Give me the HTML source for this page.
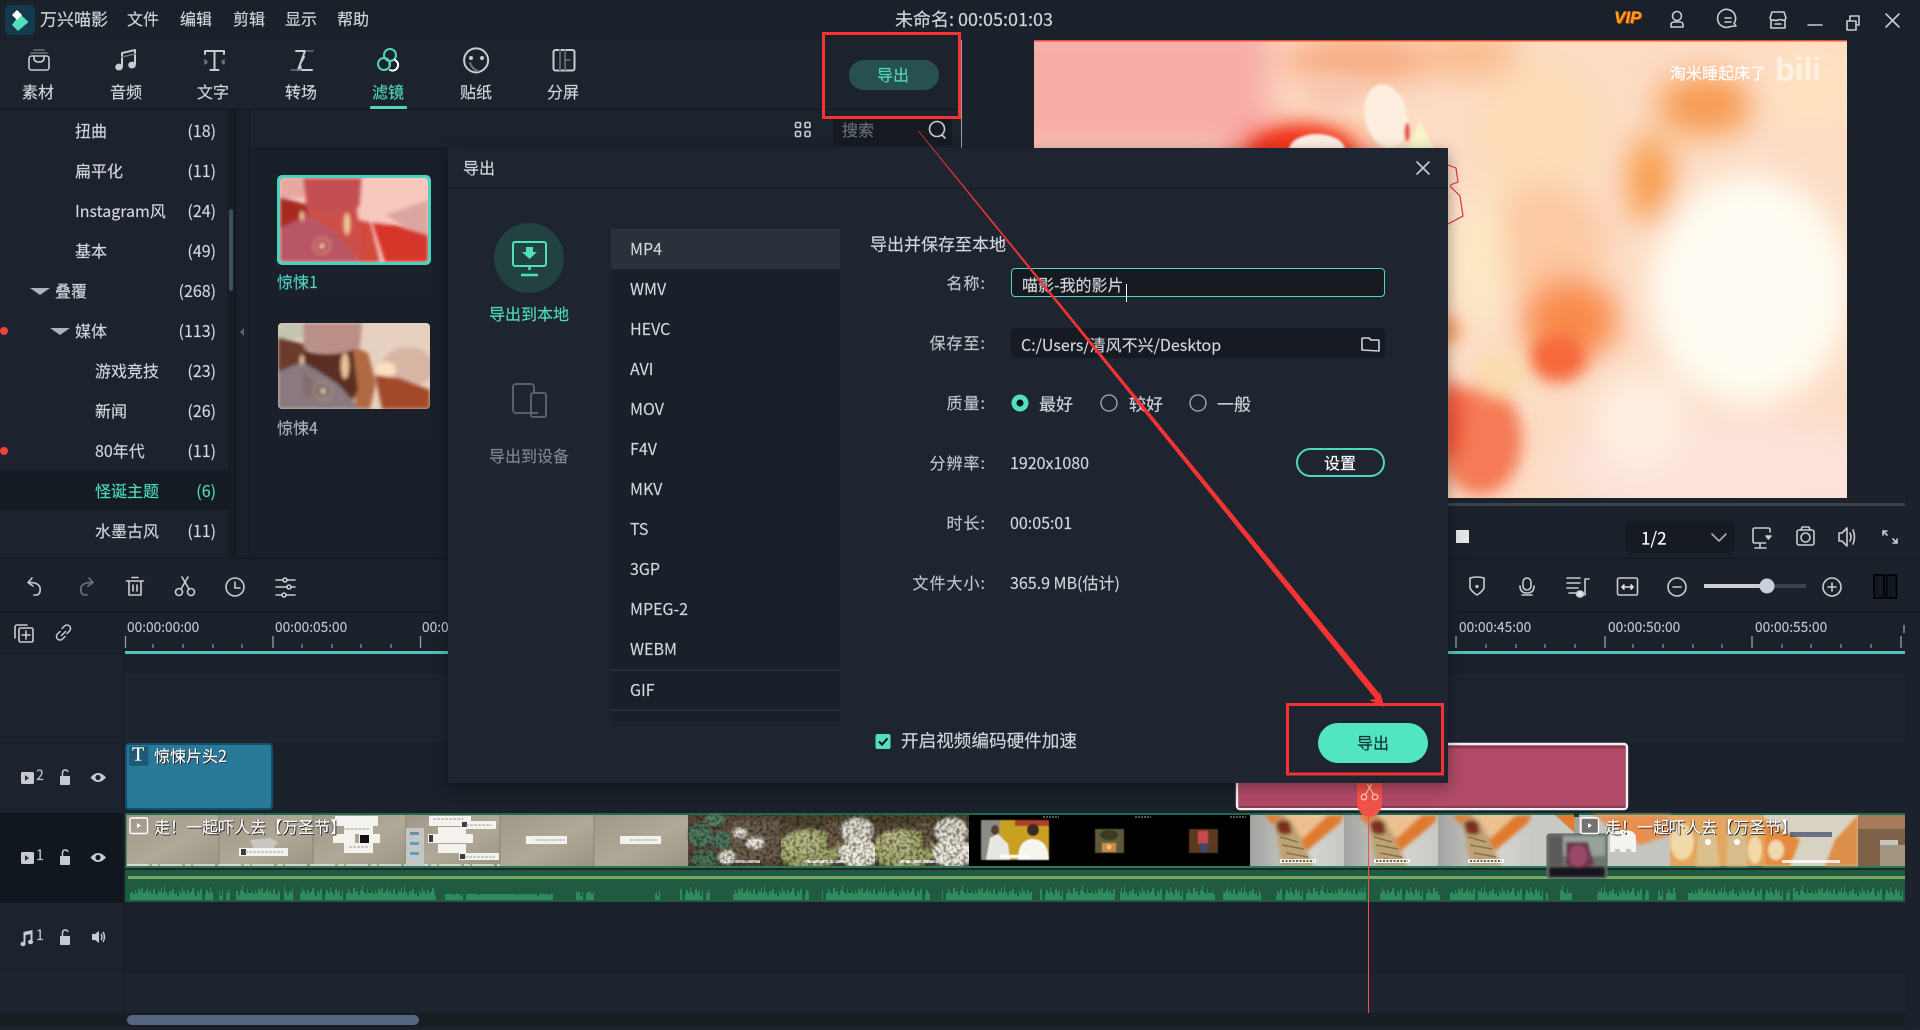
<!DOCTYPE html>
<html lang="zh-CN"><head><meta charset="utf-8"><title>万兴喵影</title>
<style>
html,body{margin:0;padding:0;background:#1b222c}
body{width:1920px;height:1030px;position:relative;overflow:hidden;font-family:"Noto Sans CJK SC","Liberation Sans",sans-serif;font-size:16px;color:#d2d6da}
.b{position:absolute}
.t{position:absolute;white-space:nowrap;line-height:1;transform:translateY(-50%);margin-top:-1px;-webkit-text-stroke:.15px currentColor}
.c{position:absolute;white-space:nowrap;line-height:1;transform:translate(-50%,-50%);margin-top:-1px;-webkit-text-stroke:.15px currentColor}
svg.l{position:absolute;left:0;top:0;width:1920px;height:1030px;overflow:visible}
.s{fill:none;stroke:#c9cdd1;stroke-width:1.6;stroke-linecap:round;stroke-linejoin:round}
.g{stroke:#6b7278}
.tl{color:#fff;text-shadow:1px 1px 0 #222,-1px 0 0 rgba(0,0,0,.4)}
</style></head><body>

<!-- panels -->
<div class="b" style="left:0;top:0;width:1920px;height:40px;background:#1a212b"></div>
<div class="b" style="left:0;top:40px;width:960px;height:69px;background:#1c232d;border-bottom:1px solid #12171d"></div>
<div class="b" style="left:0;top:110px;width:228px;height:448px;background:#1c232e"></div>
<div class="b" style="left:0;top:470px;width:228px;height:40px;background:#151b23"></div>
<div class="b" style="left:228px;top:110px;width:7px;height:448px;background:#171d25"></div>
<div class="b" style="left:229px;top:209px;width:4px;height:82px;background:#3d505c;border-radius:2px"></div>
<div class="b" style="left:235px;top:110px;width:15px;height:448px;background:#1a212b;border-left:1px solid #12171d;border-right:1px solid #12171d;box-sizing:border-box"></div>
<div class="b" style="left:250px;top:110px;width:710px;height:38px;background:#1c232d;border-bottom:1px solid #12171d"></div>
<div class="b" style="left:250px;top:149px;width:710px;height:409px;background:#19202a"></div>
<div class="b" style="left:961px;top:40px;width:1px;height:108px;background:#9aa0a6"></div>
<div class="b" style="left:0;top:558px;width:1920px;height:1px;background:#12171d"></div>
<div class="b" style="left:0;top:611px;width:1920px;height:1px;background:#141a21"></div>
<div class="b" style="left:0;top:612px;width:1920px;height:61px;background:#1a212b"></div>
<div class="b" style="left:0;top:653px;width:124px;height:1px;background:#141a21"></div>
<div class="b" style="left:0;top:654px;width:123px;height:90px;background:#1c232e"></div>
<div class="b" style="left:124px;top:673px;width:1781px;height:70px;background:#1d2430"></div>
<div class="b" style="left:0;top:743px;width:123px;height:70px;background:#1c232e;border-top:1px solid #171d25;box-sizing:border-box"></div>
<div class="b" style="left:124px;top:743px;width:1781px;height:70px;background:#1a212b"></div>
<div class="b" style="left:0;top:813px;width:123px;height:90px;background:#10171f"></div>
<div class="b" style="left:124px;top:813px;width:1781px;height:90px;background:#1a212b"></div>
<div class="b" style="left:0;top:903px;width:123px;height:70px;background:#1c232e"></div>
<div class="b" style="left:124px;top:903px;width:1781px;height:70px;background:#1a212b"></div>
<div class="b" style="left:0;top:973px;width:1905px;height:40px;background:#1d2430"></div>
<div class="b" style="left:123px;top:654px;width:1px;height:359px;background:#171d25"></div>
<div class="b" style="left:0;top:1013px;width:1905px;height:14px;background:#181d22"></div>
<div class="b" style="left:0;top:1027px;width:1920px;height:3px;background:#1c232d"></div>
<div class="b" style="left:126.5px;top:1015px;width:292px;height:10px;background:#55677f;border-radius:5px"></div>
<div class="b" style="left:833px;top:118px;width:119px;height:27px;background:#161b23;border-radius:3px"></div>
<div class="b" style="left:1625px;top:521px;width:110px;height:32px;background:#161b23;border-radius:5px"></div>
<div class="b" style="left:1448px;top:503px;width:457px;height:3px;background:#3a424d"></div>
<div class="b" style="left:277px;top:266px;width:158px;height:32px;background:#1a212b"></div>
<div class="b" style="left:277px;top:410px;width:158px;height:32px;background:#1a212b"></div>

<svg class="l" viewBox="0 0 1920 1030" xmlns="http://www.w3.org/2000/svg">
<defs>
<clipPath id="pv"><rect x="1034" y="40" width="813" height="458"/></clipPath>
<clipPath id="th1"><rect x="280" y="178" width="148" height="84" rx="4"/></clipPath>
<clipPath id="th2"><rect x="278" y="323" width="152" height="86" rx="4"/></clipPath>
<filter id="b18" x="-50%" y="-50%" width="200%" height="200%"><feGaussianBlur stdDeviation="16"/></filter>
<filter id="b6" x="-50%" y="-50%" width="200%" height="200%"><feGaussianBlur stdDeviation="8"/></filter>
<filter id="b2" x="-20%" y="-20%" width="140%" height="140%"><feGaussianBlur stdDeviation="1.800"/></filter>
<filter id="b3" x="-20%" y="-20%" width="140%" height="140%"><feGaussianBlur stdDeviation="3"/></filter>
<filter id="b1" x="-20%" y="-20%" width="140%" height="140%"><feGaussianBlur stdDeviation="1.200"/></filter>
<filter id="b05" x="-10%" y="-10%" width="120%" height="120%"><feGaussianBlur stdDeviation=".5"/></filter>
<filter id="nz" x="0" y="0" width="100%" height="100%"><feTurbulence type="fractalNoise" baseFrequency=".3" numOctaves="2" seed="4"/><feColorMatrix type="matrix" values="0 0 0 0 0  0 0 0 0 0  0 0 0 0 0  0 0 0 3 -1.200"/></filter>
<pattern id="w" patternUnits="userSpaceOnUse" x="130" y="884" width="120" height="16"><path fill="#2f8b5e" d="M0 16V9H2V7H3V10H5V6H6V9H8V5H10V8H11V4H13V9H15V7H17V3H18V8H20V6H21V10H23V5H25V9H26V11H28V6H29V8H31V4H32V9H34V2H35V8H37V11H39V7H41V9H42V5H44V10H46V8H47V12H49V6H50V9H52V3H53V7H55V10H57V6H59V11H60V8H62V4H64V9H65V12H67V7H69V10H70V5H72V16H75V10H76V6H78V9H80V3H81V8H83V11H85V5H87V9H88V7H90V12H92V6H93V16H96V9H98V5H99V8H101V10H103V4H105V9H106V7H108V11H110V6H112V1H113V8H115V10H117V5H118V9H120V16Z"/></pattern>
<linearGradient id="con" x1="0" y1="0" x2="1" y2="1"><stop offset="0" stop-color="#9f9787"/><stop offset=".55" stop-color="#b0a997"/><stop offset="1" stop-color="#9b9482"/></linearGradient>
<linearGradient id="fg" x1="0" y1="0" x2="1" y2="0"><stop offset="0" stop-color="#a2a3a0"/><stop offset=".6" stop-color="#d6d6d2"/><stop offset="1" stop-color="#c8c8c4"/></linearGradient>
<symbol id="finger" viewBox="0 0 94 51" width="94" height="51">
<rect width="94" height="51" fill="url(#fg)"/>
<g filter="url(#b2)"><polygon points="14,0 94,0 90,8 52,40" fill="#e07a2e"/><polygon points="34,0 78,0 52,24" fill="#ecc08f"/>
<path d="M24 6q10-6 18 0l22 45H32Z" fill="#bda273"/><path d="M26 8q8-6 14 0l2 10q-8 4-14-1Z" fill="#7c2e1c"/></g>
<path d="M30 22l18 5M32 30l22 4M36 38l22 4M40 44l20 3" stroke="#7c6644" stroke-width="1.600" opacity=".8" fill="none"/>
<rect x="30" y="44" width="36" height="4" fill="#fff" opacity=".85"/><path d="M32 46h32" stroke="#333" stroke-dasharray="2 1.500" stroke-width="1.500"/>
</symbol>
<symbol id="bunny" viewBox="0 0 94 51" width="94" height="51">
<rect width="94" height="51" fill="#5c4d3d"/>
<g filter="url(#b1)"><rect y="0" width="94" height="9" fill="#4f4a2e"/><ellipse cx="28" cy="34" rx="32" ry="20" fill="#a2a96c"/><ellipse cx="20" cy="28" rx="18" ry="13" fill="#b7b881"/><ellipse cx="76" cy="16" rx="17" ry="13" fill="#ded9ce"/><ellipse cx="78" cy="38" rx="20" ry="15" fill="#efe9dd"/><rect x="46" y="6" width="10" height="28" fill="#6e5b46"/></g>
<rect x="22" y="45" width="42" height="3" fill="#fff" opacity=".8"/>
</symbol>
</defs>

<!-- preview -->
<g clip-path="url(#pv)">
<rect x="1034" y="40" width="813" height="458" fill="#fcdcc4"/>
<g filter="url(#b18)">
<rect x="1000" y="20" width="270" height="130" fill="#f8aca8"/>
<ellipse cx="1300" cy="165" rx="70" ry="38" fill="#f2421f"/>
<ellipse cx="1360" cy="60" rx="80" ry="22" fill="#f7a77c"/>
<ellipse cx="1470" cy="55" rx="50" ry="22" fill="#f9b98a"/>
<ellipse cx="1540" cy="130" rx="65" ry="70" fill="#fddcb6"/>
<ellipse cx="1545" cy="240" rx="60" ry="55" fill="#fcc9a2"/>
<ellipse cx="1705" cy="105" rx="48" ry="30" fill="#f79a50"/>
<ellipse cx="1650" cy="180" rx="22" ry="45" fill="#f89a45"/>
<ellipse cx="1570" cy="320" rx="48" ry="42" fill="#f98a48"/>
<ellipse cx="1750" cy="290" rx="100" ry="115" fill="#fffdf3"/>
<ellipse cx="1810" cy="90" rx="45" ry="40" fill="#fee2c0"/>
<ellipse cx="1730" cy="470" rx="170" ry="50" fill="#fde3dc"/>
<ellipse cx="1480" cy="260" rx="24" ry="70" fill="#fdebc6"/>
<ellipse cx="1640" cy="420" rx="50" ry="50" fill="#feeee0"/>
</g>
<g filter="url(#b6)">
<ellipse cx="1300" cy="150" rx="50" ry="22" fill="#f2361a"/>
<ellipse cx="1558" cy="358" rx="28" ry="24" fill="#f7683a"/>
<ellipse cx="1480" cy="440" rx="42" ry="55" fill="#f57a55"/>
<ellipse cx="1452" cy="420" rx="12" ry="40" fill="#f0553a"/>
<ellipse cx="1500" cy="375" rx="26" ry="22" fill="#fbdcae"/>
<ellipse cx="1335" cy="90" rx="30" ry="14" fill="#f9c4b0"/>
<ellipse cx="1450" cy="330" rx="10" ry="14" fill="#f39a60"/>
</g>
<g filter="url(#b1)">
<ellipse cx="1386" cy="116" rx="21" ry="32" transform="rotate(-12 1386 116)" fill="#fcefdf"/>
<ellipse cx="1407" cy="132" rx="2.800" ry="9" fill="#e8604a"/>
<path d="M1408 150l12-30 14 30Z" fill="#f9f5c8"/>
<ellipse cx="1317" cy="150" rx="28" ry="16" fill="#fdeee2"/>
</g>
<rect x="1034" y="40" width="813" height="1.500" fill="#e8502e"/>
<path d="M1448 165l8 3 2 14-8 3M1450 186l10 10 3 20-15 8" fill="none" stroke="#d8324a" stroke-width="1.200"/>
</g>

<!-- filter thumbs -->
<g>
<rect x="277" y="175" width="154" height="90" rx="5" fill="#4ed2bd"/>
<g clip-path="url(#th1)"><rect x="280" y="178" width="148" height="84" fill="#f7c8bf"/>
<g filter="url(#b2)">
<rect x="280" y="178" width="26" height="20" fill="#e8a8a0"/>
<polygon points="280,197 308,205 312,232 280,240" fill="#a62a24"/>
<polygon points="345,178 428,178 428,210 385,225 360,220" fill="#f8c8bd"/>
<polygon points="385,215 428,200 428,240" fill="#dca6a0"/>
<polygon points="372,222 395,225 428,235 428,262 385,262" fill="#d6342a"/>
<path d="M352 218l18 4 10 40h-22Z" fill="#d24a3c"/>
<path d="M303 178h59l-2 28q-20 18-53 4Z" fill="#c45052"/>
<path d="M307 206q25 14 50 0l5 46-10 10H312Z" fill="#cd4f4a"/>
<path d="M280 228l26-12 14 6 18 14 22 26H280Z" fill="#b95666"/>
<ellipse cx="347" cy="224" rx="3" ry="11" fill="#f2c89a"/><ellipse cx="302" cy="216" rx="2" ry="5" fill="#f0c8a0"/>
<circle cx="322" cy="246" r="8" fill="none" stroke="#d89060" stroke-width="1.500"/><circle cx="322" cy="246" r="2" fill="#f8e8c0"/>
</g></g>
</g>
<g clip-path="url(#th2)"><rect x="278" y="323" width="152" height="86" fill="#e6d0c0"/>
<g filter="url(#b2)">
<rect x="278" y="323" width="28" height="16" fill="#c4c4b2"/>
<polygon points="278,337 307,345 307,372 278,378" fill="#6b3a2a"/>
<ellipse cx="408" cy="367" rx="26" ry="20" fill="#d8b6a4"/>
<ellipse cx="386" cy="370" rx="10" ry="8" fill="#fbe0c0"/>
<polygon points="375,375 400,378 430,390 430,409 382,409" fill="#a34a2c"/>
<path d="M350 345l18 8 8 30-6 26h-14Z" fill="#b06a42"/>
<path d="M303 323h59l-2 24q-26 12-56 2Z" fill="#b98f88"/>
<path d="M303 350q25 8 50 0l5 40-10 19H312Z" fill="#5a2f20"/>
<path d="M278 372l24-10 14 8 22 14 22 25H278Z" fill="#8a7a80"/>
<path d="M302 366q6 16 22 20l12 6-34 6Z" fill="#7a5a52" opacity=".4"/>
<ellipse cx="345" cy="366" rx="4" ry="13" fill="#f0c098"/><ellipse cx="302" cy="360" rx="2" ry="5" fill="#f0c8a0"/>
<circle cx="323" cy="391" r="9" fill="none" stroke="#b09070" stroke-width="1.300"/><circle cx="323" cy="391" r="2" fill="#f8e8c0"/>
</g></g>

<!-- timeline: text clip / pink clip -->
<rect x="126" y="744" width="146" height="65" rx="3" fill="#28799a" stroke="#124f68" stroke-width="2"/>
<rect x="129" y="746" width="19.500" height="20" rx="2" fill="#1d5a75"/>
<rect x="1237" y="744" width="390" height="65" rx="3" fill="#b04a66" stroke="#f4f1f2" stroke-width="2.400"/>
<rect x="1238.500" y="745.500" width="387" height="3" fill="#8a3b50"/>
<rect x="1238.500" y="806" width="387" height="2" fill="#8a3b50"/>

<!-- video clip -->
<rect x="125" y="813" width="1780" height="89" fill="#1f5a41"/>
<rect x="125" y="813" width="1780" height="2" fill="#1e6a4f"/>
<rect x="126.500" y="815" width="1778.500" height="51" fill="#a9a18f"/>
<rect x="125" y="866" width="1780" height="2" fill="#2a7a5a"/>
<rect x="125" y="868" width="1780" height="2" fill="#1a2a26"/>
<rect x="128" y="876" width="1777" height="3" fill="#74a85f"/>
<!-- concrete thumbs -->
<rect x="126.500" y="815" width="93" height="51" fill="url(#con)"/><rect x="219" y="815" width="94" height="51" fill="url(#con)"/><rect x="313" y="815" width="93" height="51" fill="url(#con)"/><rect x="406" y="815" width="94" height="51" fill="url(#con)"/><rect x="500" y="815" width="94" height="51" fill="url(#con)"/><rect x="594" y="815" width="94" height="51" fill="url(#con)"/>
<path d="M219 815v51M313 815v51M406 815v51M500 815v51M594 815v51" stroke="#857e6e" stroke-width=".8"/>
<path d="M127 865H219M219 865H313M313 865H406M406 865H500" stroke="#e8e6df" stroke-width="1.600" stroke-dasharray="22 3 6 2"/>
<g fill="#f3f2ee">
<path d="M250 840l20-2 8 4-6 8-18-1Z" fill="#c9c7c0"/>
<rect x="239" y="848" width="49" height="8"/>
<rect x="335" y="816" width="43" height="10"/><rect x="344" y="826" width="29" height="8"/><rect x="333" y="834" width="22" height="9"/><rect x="359" y="834" width="21" height="9"/><rect x="344" y="843" width="29" height="10"/>
<rect x="406" y="828" width="18" height="38" fill="#c5c6c6"/>
<rect x="429" y="816" width="42" height="10"/><rect x="461" y="821" width="35" height="8"/><rect x="438" y="827" width="28" height="7"/><rect x="428" y="834" width="45" height="9"/><rect x="438" y="844" width="28" height="9"/><rect x="459" y="853" width="40" height="7"/>
<rect x="526" y="836" width="41" height="8"/><rect x="620" y="836" width="41" height="8"/>
</g>
<g fill="#3b3b3b"><rect x="241" y="849" width="5" height="6"/><rect x="360" y="835" width="9" height="8" fill="#111"/><rect x="429" y="835" width="4" height="7"/><rect x="462" y="822" width="5" height="5"/><rect x="460" y="854" width="5" height="5"/><rect x="410" y="832" width="9" height="3" fill="#6a8da8"/><rect x="410" y="842" width="9" height="3" fill="#5e9ec4"/><rect x="410" y="852" width="9" height="3" fill="#5e9ec4"/></g>
<path d="M339 829h30M349 847h20M433 819h30M466 825h26M535 840h30M630 840h28M245 852h38M465 857h30" stroke="#a0a0a0" stroke-width="1" stroke-dasharray="3 1"/>
<!-- plant thumbs -->
<g><rect x="688" y="815" width="93" height="51" fill="#5a4a3a"/>
<g filter="url(#b1)"><ellipse cx="700" cy="835" rx="12" ry="12" fill="#4f7a60"/><ellipse cx="722" cy="840" rx="12" ry="9" fill="#4f7a60"/><ellipse cx="705" cy="858" rx="14" ry="8" fill="#4a7058"/><rect x="730" y="820" width="50" height="40" fill="#6d5e4e"/><ellipse cx="740" cy="833" rx="7" ry="5" fill="#e9e5d8"/><ellipse cx="755" cy="843" rx="9" ry="6" fill="#efeade"/><ellipse cx="727" cy="857" rx="8" ry="7" fill="#e6e2d3"/><ellipse cx="715" cy="820" rx="10" ry="6" fill="#5a8468"/></g>
<rect x="720" y="860" width="40" height="3" fill="#fff" opacity=".7"/></g>
<use href="#bunny" x="781" y="815"/><use href="#bunny" x="875" y="815"/>
<rect x="688" y="815" width="281" height="51" filter="url(#nz)" opacity=".45"/>
<!-- black thumbs -->
<rect x="969" y="815" width="281" height="51" fill="#000"/>
<g filter="url(#b05)"><rect x="981" y="820" width="68" height="40" fill="#c9a020"/><rect x="981" y="820" width="19" height="40" fill="#8b8d84"/><path d="M1015 820h34v6h-34Z" fill="#a8402c"/><path d="M986 860l4-22 8-4 10 10 2 16Z" fill="#e8e8e2"/><ellipse cx="995" cy="830" rx="4" ry="5" fill="#5a3a2a"/><path d="M1018 860q0-20 14-21 16 0 17 21Z" fill="#f5f5ee"/><circle cx="1033" cy="830" r="6" fill="#3a2a20"/><rect x="1000" y="855" width="30" height="3" fill="#fff"/></g>
<g filter="url(#b05)"><rect x="1095" y="829" width="29" height="24" fill="#5c5a3a"/><rect x="1102" y="843" width="14" height="9" fill="#c88a50"/><circle cx="1109" cy="847" r="2.500" fill="#f8c060"/><ellipse cx="1109" cy="835" rx="9" ry="5" fill="#3a3a24"/>
<rect x="1189" y="829" width="29" height="24" fill="#5a3a22"/><rect x="1198" y="831" width="10" height="13" fill="#c84a48"/><rect x="1200" y="843" width="7" height="9" fill="#3a4a6a"/></g>
<path d="M1043 817h16M1135 817h16M1230 817h16" stroke="#8a8a8a" stroke-width="1.200" stroke-dasharray="2 1"/>
<!-- finger thumbs -->
<use href="#finger" x="1250" y="815"/><use href="#finger" x="1344" y="815"/><use href="#finger" x="1438" y="815"/>
<rect x="1532" y="815" width="42" height="51" fill="#c8c8c4"/><polygon points="1555,815 1574,815 1574,832" fill="#e37c2e"/>
<rect x="1574" y="813" width="5" height="4" fill="#1c3a30"/>
<rect x="1579" y="815" width="91" height="51" fill="#c4c4c0"/><g filter="url(#b2)"><polygon points="1592,815 1670,815 1670,835 1640,845" fill="#e88f4e"/></g>
<g><rect x="1670" y="815" width="94" height="51" fill="#e3a55f"/><g filter="url(#b1)"><ellipse cx="1682" cy="842" rx="12" ry="18" fill="#f2d9a8"/><path d="M1698 835q8-12 18 0l4 31h-24Z" fill="#d9c08c"/><path d="M1728 832q8-10 18 0l2 34h-22Z" fill="#d6bd8a"/><ellipse cx="1755" cy="850" rx="7" ry="14" fill="#f2d9a8"/></g><circle cx="1708" cy="842" r="3" fill="#fff"/><circle cx="1737" cy="842" r="3" fill="#fff"/></g>
<g><rect x="1764" y="815" width="94" height="51" fill="#d8d2c2"/><g filter="url(#b1)"><polygon points="1764,818 1800,840 1790,866 1764,866" fill="#e58a3c"/><ellipse cx="1776" cy="850" rx="8" ry="10" fill="#f1d9b0"/><polygon points="1835,840 1858,815 1858,866 1825,866" fill="#dc8f4a"/></g><rect x="1790" y="832" width="42" height="5" fill="#3b4768" opacity=".7"/><rect x="1782" y="860" width="58" height="3" fill="#fff" opacity=".8"/></g>
<g><rect x="1858" y="815" width="47" height="51" fill="#7f6048"/><rect x="1858" y="815" width="47" height="14" fill="#a77a5c"/><rect x="1880" y="845" width="25" height="21" fill="#a59680"/><rect x="1880" y="840" width="18" height="5" fill="#c4c4c0"/></g>
<!-- playhead over clip -->
<rect x="1368" y="790" width="1" height="223" fill="#f0524a"/>
<path d="M1357 783h25v20a12.500 14 0 0 1-25 0Z" fill="#f0524a"/>
<g fill="none" stroke="#fbd6d0" stroke-width="1.100"><circle cx="1364" cy="797" r="2.800"/><circle cx="1375" cy="797" r="2.800"/><path d="M1365.500 794.500l6-10M1373.500 794.500l-6-10"/></g>
<!-- ghost & transition -->
<path d="M1610 852v-14q0-8 13-8t13 8v14h-5v-3h-5v3h-6v-3h-5v3Z" fill="#f5f3ef"/>
<rect x="1547" y="834" width="60" height="44" rx="3" fill="#70766f"/>
<g filter="url(#b1)"><rect x="1549" y="836" width="56" height="20" fill="#95a39a"/><rect x="1549" y="836" width="14" height="30" fill="#5a5a58"/><path d="M1566 842l22 0 6 22-14 10-14-10Z" fill="#6a3a50"/><ellipse cx="1578" cy="856" rx="9" ry="11" fill="#9a4a68"/><rect x="1549" y="867" width="56" height="10" fill="#15121a"/></g>
<!-- waveform -->
<g fill="url(#w)"><rect x="130" y="884" width="83" height="16"/><rect x="219" y="884" width="11" height="16"/><rect x="236" y="884" width="44" height="16"/><rect x="284" y="884" width="9" height="16"/><rect x="300" y="884" width="136" height="16"/><rect x="445" y="894" width="108" height="6"/><rect x="576" y="892" width="18" height="8"/><rect x="655" y="888" width="5" height="12"/><rect x="680" y="884" width="30" height="16"/><rect x="733" y="884" width="76" height="16"/><rect x="822" y="884" width="108" height="16"/><rect x="942" y="884" width="90" height="16"/><rect x="1040" y="884" width="75" height="16"/><rect x="1120" y="884" width="95" height="16"/><rect x="1223" y="884" width="38" height="16"/><rect x="1276" y="884" width="90" height="16"/><rect x="1380" y="884" width="60" height="16"/><rect x="1450" y="884" width="25" height="16"/><rect x="1478" y="884" width="70" height="16"/><rect x="1560" y="884" width="12" height="16"/><rect x="1597" y="884" width="52" height="16"/><rect x="1658" y="884" width="18" height="16"/><rect x="1688" y="884" width="18" height="16"/><rect x="1700" y="884" width="90" height="16"/><rect x="1793" y="884" width="46" height="16"/><rect x="1834" y="884" width="71" height="16"/></g>
<rect x="1547" y="834" width="60" height="44" rx="3" fill="none" stroke="#59606a"/>

<!-- ruler -->
<rect x="125" y="651" width="1780" height="3" fill="#4fc4b6"/>
<path d="M125.500 636v12M273 636v12M420.500 636v12M1456 636v12M1605 636v12M1752 636v12M1901 636v12M1904 625v8" stroke="#8ea3b0" stroke-width="1.300" fill="none"/>
<path d="M153 644v4M183 644v4M213 644v4M242 644v4M302 644v4M332 644v4M361 644v4M391 644v4M1486 644v4M1516 644v4M1545 644v4M1575 644v4M1633 644v4M1663 644v4M1693 644v4M1722 644v4M1782 644v4M1811 644v4M1841 644v4M1871 644v4" stroke="#7f99a8" stroke-width="1.200" fill="none"/>

<!-- title bar icons -->
<rect x="5" y="5" width="30" height="30" rx="6" fill="#153a4e"/>
<polygon points="20,14 28.500,22 18,31 12,25" fill="#52e0bc"/>
<polygon points="17,10 22,15 17,20 12,15" fill="#fff"/>
<g class="s" stroke-width="1.300">
<circle cx="1677" cy="16" r="4.500"/><path d="M1671 27v-2q0-3 3-3h6q3 0 3 3v2Z"/>
<path d="M1736 26l-2-2.500a9 9 0 1 0-3.500 3Z"/><path d="M1725 18h6M1725 22h6"/>
<path d="M1770 18l2-6h12l2 6q-1 3-4 2-2-1-4 0-2 1-4 0-3 1-4-2ZM1771 20v8h14v-8M1775 24h6"/>
<path d="M1808 25h14"/>
<path d="M1847 21h9v9h-9ZM1850 21v-5h9v9h-3"/>
<path d="M1886 14l13 13M1899 14l-13 13"/>
</g>

<!-- toolbar icons -->
<g class="s">
<rect x="29" y="56" width="20" height="14" rx="2.500"/><path d="M34 56v2q0 4 5 4t5-4v-2"/><path class="g" d="M34 50h10M31 53h16"/>
<path d="M122 67V53l13-3v14" stroke-width="2"/><path class="g" d="M122 57l13-3"/><ellipse cx="119" cy="67" rx="3" ry="2.600" fill="#c9cdd1"/><ellipse cx="132" cy="65" rx="3" ry="2.600" fill="#c9cdd1"/>
<path d="M205 54v-3h19v3M214.500 51v19M210.500 70h8" stroke-width="2"/><path class="g" d="M205 60v4l2-2ZM224 60v4l-2-2Z"/>
<path d="M296 51h9l-7 19M304 57l-4 7 1 6h11" stroke-width="2"/><path class="g" d="M291 70h10M307 51h6"/>
<circle cx="390" cy="55" r="6" stroke="#4fd8b8" stroke-width="2"/><circle cx="384" cy="64" r="6" stroke="#4fd8b8" stroke-width="2"/><path d="M395 60a5.500 5.500 0 0 1-5 10" stroke="#fff" stroke-width="2"/><path d="M390 61a5.500 5.500 0 0 0 0 5" stroke="#4fd8b8" stroke-width="2"/>
<path d="M479 72a12 12 0 1 1 9-10q-1 7-9 10Z" stroke-width="2"/><circle cx="471" cy="58" r="1.200" fill="#c9cdd1"/><circle cx="482" cy="58" r="1.200" fill="#c9cdd1"/><path class="g" d="M470 63q2 6 8 8" stroke-width="2"/>
<rect x="553.500" y="50" width="21" height="20.500" rx="2" stroke-width="2"/><path d="M560 50v20" stroke="#5c6268" stroke-width="2"/><path class="g" d="M565 50v20M565 60h5"/>
</g>
<!-- grid / search -->
<g class="s" stroke-width="1.400"><rect x="795.500" y="122.500" width="5" height="5" rx="1.200"/><rect x="805" y="122.500" width="5" height="5" rx="1.200"/><rect x="795.500" y="131.500" width="5" height="5" rx="1.200"/><rect x="805" y="131.500" width="5" height="5" rx="1.200"/>
<circle cx="937" cy="129" r="7.500"/><path d="M942 135l3 3"/></g>
<path d="M244 328v8l-4-4Z" fill="#5c646c"/>

<!-- preview ctrl -->
<rect x="1456" y="530" width="13" height="13" fill="#e4e4e4"/>
<g class="s" stroke-width="1.400">
<path d="M1712 534l7 7 7-7" stroke="#a5abb1"/>
<path d="M1770 532v-3a2 2 0 0 0-1.500-1h-14a1.500 1.500 0 0 0-1.500 1.500v12a1.500 1.500 0 0 0 1.500 1.500h11"/><path d="M1760 544v4M1755 548h11"/><path d="M1766 536h5l-2.500 3Z" fill="#c9cdd1"/>
<rect x="1797" y="530" width="17" height="15" rx="2"/><circle cx="1805.500" cy="537.500" r="4.500"/><path d="M1801 530l1-3h7l1 3"/>
<path d="M1839 533h3l5-5v18l-5-5h-3ZM1850 533q2 4 0 8M1853 530q3 7 0 14"/>
<path d="M1883 531l4 4M1883 531v4M1883 531h4M1897 543l-4-4M1897 543v-4M1897 543h-4"/>
</g>
<!-- timeline toolbar -->
<g class="s" stroke-width="1.500">
<path d="M32 578l-4 4.500 5 3.500M28 582.500q10-.5 12 5 1 6-3 7.500h-3"/>
<g stroke="#6e757b"><path d="M89 578l4 4.500-5 3.500M93 582.500q-10-.5-12 5-1 6 3 7.500h3"/></g>
<path d="M126.500 581h17M132 577.500h6M129 581v14h12v-14M133 585v6M137 585v6"/>
<circle cx="179" cy="592" r="3.500"/><circle cx="191" cy="592" r="3.500"/><path d="M181 589l7-12M189 589l-7-12"/>
<circle cx="235" cy="587" r="9"/><path d="M235 582v6h5"/>
<path d="M276 580h7M287 580h8M276 587h11M291 587h4M276 595h6M286 595h9"/><circle cx="285" cy="580" r="2"/><circle cx="289" cy="587" r="2"/><circle cx="284" cy="595" r="2"/>
<path d="M1470 578q7-2 14 0v10q-2 4-7 7-5-3-7-7Z"/><circle cx="1477" cy="586.500" r=".8" fill="#c9cdd1"/>
<rect x="1523" y="578" width="8" height="12" rx="4"/><path d="M1520 586q0 7 7 7t7-7M1522 595h10"/>
<path d="M1567 578h13M1567 583h13M1567 588h11M1569 593h7M1585 595v-16h4"/><ellipse cx="1580" cy="594" rx="3.500" ry="3" fill="#e4e4e4"/>
<rect x="1617.500" y="578" width="20" height="17" rx="1.500"/><path d="M1622 587h11M1622 587l2-2M1622 587l2 2M1633 587l-2-2M1633 587l-2 2" stroke="#e6e6e6"/>
<circle cx="1677" cy="587" r="9"/><path d="M1673 587h8"/>
<circle cx="1832" cy="587" r="9"/><path d="M1828 587h8M1832 583v8"/>
</g>
<rect x="1704" y="584" width="102" height="4" fill="#3a424d"/><rect x="1704" y="584" width="62" height="4" fill="#cfcfcf"/><circle cx="1767" cy="586" r="7.500" fill="#c8d0dc"/>
<rect x="1874" y="575" width="10" height="23" fill="#111820" stroke="#000" stroke-width="1.600"/><rect x="1886.500" y="575" width="10" height="23" fill="#111820" stroke="#000" stroke-width="1.600"/>
<!-- ruler left icons -->
<g class="s" stroke-width="1.300"><rect x="19" y="628" width="14" height="14" rx="1.500"/><path d="M15 638v-11a2 2 0 0 1 2-2h10M26 631v8M22 635h8"/>
<path d="M62 628.500l2.500-2.500a3.500 3.500 0 0 1 5 5l-2.500 2.500M65 636.500l-2.500 2.500a3.500 3.500 0 0 1-5-5l2.500-2.500M61.500 635.500l4-4" stroke-width="1.500"/></g>
<!-- track icons -->
<g fill="#c7cbcf">
<rect x="21" y="772" width="13" height="12" rx="1.500"/><rect x="21" y="852" width="13" height="12" rx="1.500"/>
<ellipse cx="23" cy="944" rx="2.600" ry="2.200"/><ellipse cx="30.500" cy="942" rx="2.600" ry="2.200"/><path d="M23.500 944v-12l9-2v12h-2v-8l-5 1.200V944Z"/>
<path d="M60 776h10v8a1 1 0 0 1-1 1h-8a1 1 0 0 1-1-1Z"/><path d="M60 856h10v8a1 1 0 0 1-1 1h-8a1 1 0 0 1-1-1Z"/><path d="M60 936h10v8a1 1 0 0 1-1 1h-8a1 1 0 0 1-1-1Z"/>
<path d="M90.500 777.500q7.500-9 15.500 0-8 9-15.500 0Z"/><path d="M90.500 857.500q7.500-9 15.500 0-8 9-15.500 0Z"/>
<path d="M92 934h3l4-3v12l-4-3h-3Z"/>
</g>
<g fill="none" stroke="#c7cbcf" stroke-width="1.500"><path d="M62.500 776v-3q0-3 2.500-3t3 2M62.500 856v-3q0-3 2.500-3t3 2M62.500 936v-3q0-3 2.500-3t3 2M101 934q2 3 0 6M103 932q3 5 0 10"/></g>
<path d="M25 775v6l4-3Z M25 855v6l4-3Z" fill="#2a3038"/><circle cx="98" cy="777.500" r="2.600" fill="#1c232e"/><circle cx="98" cy="857.500" r="2.600" fill="#10171f"/>
<!-- clip badges -->
<g fill="none" stroke="#fff" stroke-width="1.400"><rect x="130" y="818" width="17.500" height="15.500" rx="1.500"/><rect x="1581" y="818" width="17.500" height="15.500" rx="1.500" fill="rgba(60,60,60,.6)"/></g>
<path d="M137 823v5l4-2.500Z M1588 823v5l4-2.500Z" fill="#fff"/>
<!-- sidebar triangles -->
<path d="M30 288h20l-10 7Z M50 328h20l-10 7Z" fill="#aeb3b8"/>
<circle cx="4" cy="331" r="4" fill="#f04438"/><circle cx="4" cy="451" r="4" fill="#f04438"/>
</svg>

<!-- text outside dialog -->
<span class="t" style="left:40px;top:19px;font-size:17px">万兴喵影</span>
<span class="t" style="left:127px;top:19px">文件</span>
<span class="t" style="left:180px;top:19px">编辑</span>
<span class="t" style="left:233px;top:19px">剪辑</span>
<span class="t" style="left:285px;top:19px">显示</span>
<span class="t" style="left:337px;top:19px">帮助</span>
<span class="c" style="left:974px;top:20px;font-size:18px">未命名: 00:05:01:03</span>
<span class="t" style="left:1614px;top:19px;font:italic bold 17px 'Liberation Sans',sans-serif;color:#f9a11b;text-shadow:1px 1px 0 #c4380e">VIP</span>

<span class="c" style="left:38px;top:92px">素材</span>
<span class="c" style="left:126px;top:92px">音频</span>
<span class="c" style="left:213px;top:92px">文字</span>
<span class="c" style="left:301px;top:92px">转场</span>
<span class="c" style="left:388px;top:92px;color:#4fd8b8">滤镜</span>
<span class="c" style="left:476px;top:92px">贴纸</span>
<span class="c" style="left:563px;top:92px">分屏</span>
<div class="b" style="left:370px;top:106px;width:37px;height:3px;background:#4fd8b8;border-radius:1px"></div>

<span class="t" style="left:75px;top:131px">扭曲</span><span class="t" style="right:1704px;top:131px">(18)</span>
<span class="t" style="left:75px;top:171px">扁平化</span><span class="t" style="right:1704px;top:171px">(11)</span>
<span class="t" style="left:75px;top:211px">Instagram风</span><span class="t" style="right:1704px;top:211px">(24)</span>
<span class="t" style="left:75px;top:251px">基本</span><span class="t" style="right:1704px;top:251px">(49)</span>
<span class="t" style="left:55px;top:291px">叠覆</span><span class="t" style="right:1704px;top:291px">(268)</span>
<span class="t" style="left:75px;top:331px">媒体</span><span class="t" style="right:1704px;top:331px">(113)</span>
<span class="t" style="left:95px;top:371px">游戏竞技</span><span class="t" style="right:1704px;top:371px">(23)</span>
<span class="t" style="left:95px;top:411px">新闻</span><span class="t" style="right:1704px;top:411px">(26)</span>
<span class="t" style="left:95px;top:451px">80年代</span><span class="t" style="right:1704px;top:451px">(11)</span>
<span class="t" style="left:95px;top:491px;color:#4fd8b8">怪诞主题</span><span class="t" style="right:1704px;top:491px;color:#4fd8b8">(6)</span>
<span class="t" style="left:95px;top:531px">水墨古风</span><span class="t" style="right:1704px;top:531px">(11)</span>

<span class="t" style="left:277px;top:282px;color:#4fd0c0">惊悚1</span>
<span class="t" style="left:277px;top:428px;color:#a8b4bc">惊悚4</span>
<span class="t" style="left:842px;top:130px;color:#666d75">搜索</span>
<span class="t" style="left:1670px;top:73px;color:#fff">淘米睡起床了</span>
<span class="t" style="left:1775px;top:71px;font:bold 32px 'Liberation Sans',sans-serif;color:#fff;opacity:.55">bili</span>
<span class="t" style="left:1641px;top:538px;font-size:17px;color:#fff">1/2</span>

<span class="t" style="left:127px;top:628px;font-size:13.700px;color:#b8c4cc">00:00:00:00</span>
<span class="t" style="left:275px;top:628px;font-size:13.700px;color:#b8c4cc">00:00:05:00</span>
<span class="t" style="left:422px;top:628px;font-size:13.700px;color:#b8c4cc">00:00:10:00</span>
<span class="t" style="left:1459px;top:628px;font-size:13.700px;color:#b8c4cc">00:00:45:00</span>
<span class="t" style="left:1608px;top:628px;font-size:13.700px;color:#b8c4cc">00:00:50:00</span>
<span class="t" style="left:1755px;top:628px;font-size:13.700px;color:#b8c4cc">00:00:55:00</span>

<span class="t" style="left:36px;top:776px;font-size:14px;color:#b8c4cc">2</span>
<span class="t" style="left:36px;top:856px;font-size:14px;color:#b8c4cc">1</span>
<span class="t" style="left:36px;top:936px;font-size:14px;color:#b8c4cc">1</span>
<span class="t" style="left:132px;top:756px;font:20px 'Liberation Serif',serif;color:#fff">T</span>
<span class="t tl" style="left:154px;top:756px">惊悚片头2</span>
<span class="t tl" style="left:154px;top:827px">走！一起吓人去【万圣节】</span>
<span class="t tl" style="left:1605px;top:827px">走！一起吓人去【万圣节】</span>

<!-- dialog -->
<div class="b" style="left:448px;top:148px;width:1000px;height:635px;background:#1e2530;box-shadow:0 4px 14px rgba(0,0,0,.35)">
<div class="b" style="left:0;top:40px;width:1000px;height:1px;background:#161b22"></div>
<div class="b" style="left:163px;top:81px;width:229px;height:493px;background:#19202a;border-radius:0 0 4px 4px"></div>
<div class="b" style="left:163px;top:81px;width:229px;height:40px;background:#2a313b"></div>
<div class="b" style="left:163px;top:521px;width:229px;height:2px;background:#262d37"></div>
<div class="b" style="left:163px;top:561px;width:229px;height:2px;background:#262d37"></div>
<div class="b" style="left:563px;top:120px;width:372px;height:27px;background:#151a21;border:1px solid #4fd8b8;border-radius:4px"></div>
<div class="b" style="left:563px;top:180px;width:374px;height:30px;background:#161b23;border-radius:4px"></div>
<div class="b" style="left:848px;top:300px;width:85px;height:25px;border:2px solid #4fd8b8;border-radius:15px"></div>
<div class="b" style="left:678px;top:136px;width:1px;height:18px;background:#fff"></div>
<div class="b" style="left:870px;top:575px;width:110px;height:40px;background:#52e5c2;border-radius:20px"></div>
</div>

<span class="t" style="left:463px;top:168px">导出</span>
<span class="c" style="left:529px;top:314px;color:#4fd8b8">导出到本地</span>
<span class="c" style="left:529px;top:456px;color:#7d848d">导出到设备</span>
<span class="t" style="left:630px;top:249px">MP4</span>
<span class="t" style="left:630px;top:289px">WMV</span>
<span class="t" style="left:630px;top:329px">HEVC</span>
<span class="t" style="left:630px;top:369px">AVI</span>
<span class="t" style="left:630px;top:409px">MOV</span>
<span class="t" style="left:630px;top:449px">F4V</span>
<span class="t" style="left:630px;top:489px">MKV</span>
<span class="t" style="left:630px;top:529px">TS</span>
<span class="t" style="left:630px;top:569px">3GP</span>
<span class="t" style="left:630px;top:609px">MPEG-2</span>
<span class="t" style="left:630px;top:649px">WEBM</span>
<span class="t" style="left:630px;top:690px">GIF</span>

<span class="t" style="left:870px;top:244px;font-size:17px">导出并保存至本地</span>
<span class="t" style="right:934px;top:283px;color:#c0c5ca;letter-spacing:1px">名称:</span>
<span class="t" style="left:1022px;top:285px">喵影-我的影片</span>
<span class="t" style="right:934px;top:343px;color:#c0c5ca;letter-spacing:1px">保存至:</span>
<span class="t" style="left:1021px;top:345px">C:/Users/清风不兴/Desktop</span>
<span class="t" style="right:934px;top:403px;color:#c0c5ca;letter-spacing:1px">质量:</span>
<span class="t" style="left:1039px;top:404px;font-size:17px">最好</span>
<span class="t" style="left:1129px;top:404px;font-size:17px">较好</span>
<span class="t" style="left:1217px;top:404px;font-size:17px">一般</span>
<span class="t" style="right:934px;top:463px;color:#c0c5ca;letter-spacing:1px">分辨率:</span>
<span class="t" style="left:1010px;top:463px">1920x1080</span>
<span class="c" style="left:1340px;top:463px;color:#fff">设置</span>
<span class="t" style="right:934px;top:523px;color:#c0c5ca;letter-spacing:1px">时长:</span>
<span class="t" style="left:1010px;top:523px">00:05:01</span>
<span class="t" style="right:934px;top:583px;color:#c0c5ca;letter-spacing:1px">文件大小:</span>
<span class="t" style="left:1010px;top:583px">365.9 MB(估计)</span>
<span class="t" style="left:901px;top:742px;font-size:17.600px">开启视频编码硬件加速</span>
<span class="c" style="left:1373px;top:743px;color:#14322e">导出</span>

<div class="b" style="left:849px;top:60px;width:90px;height:30px;background:#27504f;border-radius:15px"></div>
<span class="c" style="left:893px;top:75px;color:#4fd8b8">导出</span>

<svg class="l" viewBox="0 0 1920 1030" xmlns="http://www.w3.org/2000/svg">
<ellipse cx="529" cy="258" rx="35" ry="35" fill="#21423f"/>
<g fill="none" stroke="#52e0bc" stroke-width="2"><rect x="513" y="242" width="33" height="24" rx="2"/><path d="M529.500 266v4M521 275h17" stroke-width="2.500"/></g>
<path d="M526 247h7v5h4l-7.500 7-7.500-7h4Z" fill="#52e0bc"/>
<g fill="none" stroke="#5a6068" stroke-width="2"><path d="M538 413h-22a3 3 0 0 1-3-3v-23a3 3 0 0 1 3-3h15a3 3 0 0 1 3 3v5"/><rect x="531" y="393" width="15" height="24" rx="2"/></g>
<g class="s" stroke-width="1.500"><path d="M1417 162l12 12M1429 162l-12 12"/>
<path d="M1362 350v-11a1 1 0 0 1 1-1h6l2 2h7a1 1 0 0 1 1 1v10Z" stroke="#d0d4d8"/></g>
<circle cx="1020" cy="403" r="8.500" fill="#52e0bc"/><circle cx="1020" cy="403" r="3.500" fill="#0b0e12"/>
<circle cx="1109" cy="403" r="8" fill="none" stroke="#a8adb3" stroke-width="1.300"/>
<circle cx="1198" cy="403" r="8" fill="none" stroke="#a8adb3" stroke-width="1.300"/>
<rect x="875.500" y="734" width="15" height="15" rx="2" fill="#52e0bc"/><path d="M879 741.500l3 3 5.500-6" fill="none" stroke="#0b0e12" stroke-width="2"/>
<!-- annotations -->
<rect x="823.500" y="33.500" width="136" height="84" fill="none" stroke="#f63333" stroke-width="3"/>
<rect x="1287.500" y="704.500" width="155" height="69.500" fill="none" stroke="#f63333" stroke-width="3"/>
<polygon points="918,131 918.600,130.600 1380.500,695 1380,690 1384,707 1369,700 1375.500,699" fill="#f63333"/>
</svg>
</body></html>
